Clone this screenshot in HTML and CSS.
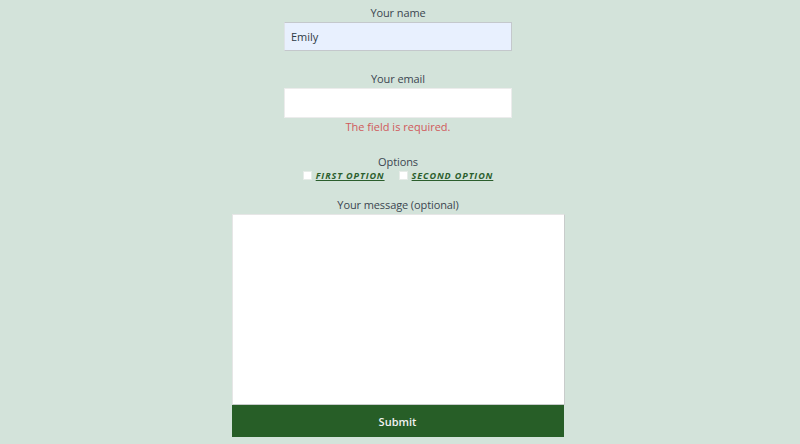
FILE: index.html
```html
<!DOCTYPE html>
<html lang="en">
<head>
<meta charset="utf-8">
<title>Contact form</title>
<link rel="stylesheet" href="styles.css">
</head>
<body>
<form class="form">
  <div class="field field-name">
    <label class="label" for="name">Your name</label>
    <input class="input input-filled" id="name" type="text" value="Emily">
  </div>
  <div class="field field-email">
    <label class="label" for="email">Your email</label>
    <input class="input" id="email" type="email">
    <div class="error">The field is required.</div>
  </div>
  <div class="field field-options">
    <div class="label">Options</div>
    <div class="options">
      <label class="option"><span class="box"></span><span class="option-text">First option</span></label>
      <label class="option"><span class="box"></span><span class="option-text">Second option</span></label>
    </div>
  </div>
  <div class="field field-message">
    <label class="label" for="msg">Your message (optional)</label>
    <textarea class="textarea" id="msg"></textarea>
    <button class="submit" type="button">Submit</button>
  </div>
</form>
</body>
</html>
```

FILE: styles.css
```css
html, body {
  margin: 0;
  padding: 0;
  background: #d3e3da;
  height: 100%;
  overflow: hidden;
}
body {
  font-family: "Open Sans", "Noto Sans", sans-serif;
  font-size: 11px;
  color: #3b4650;
}
.form {
  display: flex;
  flex-direction: column;
  align-items: center;
  padding-top: 6px;
  padding-right: 4px;
}
.field {
  display: flex;
  flex-direction: column;
  align-items: center;
}
.label {
  line-height: 14px;
  height: 14px;
  margin-bottom: 2px;
  letter-spacing: -0.1px;
}
.input {
  box-sizing: border-box;
  width: 228px;
  height: 30px;
  margin: 0;
  padding: 0 6px;
  background: #ffffff;
  border: 1px solid #ececec;
  font-family: inherit;
  font-size: 11px;
  color: #2f3a44;
  outline: none;
}
.input-filled {
  background: #e8f0fe;
  border: 1px solid #c4c8cc;
  border-left-color: #dfe3e8;
  height: 29px;
}
.field-email {
  margin-top: 21px;
}
.error {
  margin-top: 2px;
  line-height: 14px;
  color: #d05a5a;
}
.field-options {
  margin-top: 21px;
}
.field-options .label {
  margin-bottom: 0;
}
.options {
  display: flex;
  gap: 14px;
  height: 12px;
  align-items: center;
  margin-bottom: 1px;
}
.option {
  display: flex;
  align-items: center;
  gap: 4px;
}
.box {
  width: 9px;
  height: 9px;
  background: #ffffff;
  border: 1px solid #e6ece8;
  box-sizing: border-box;
}
.option-text {
  font-size: 9px;
  font-weight: 700;
  font-style: italic;
  text-transform: uppercase;
  text-decoration: underline;
  letter-spacing: 0.9px;
  color: #2b5e2d;
}
.field-message {
  margin-top: 16px;
}
.textarea {
  box-sizing: border-box;
  width: 333px;
  height: 191px;
  margin: 0;
  padding: 4px;
  background: #ffffff;
  border: 1px solid #e6e6e6;
  border-right-color: #c8cccb;
  border-bottom-color: #c8cccb;
  resize: none;
  display: block;
}
.submit {
  width: 332px;
  height: 32px;
  margin: 0;
  align-self: flex-start;
  border: none;
  background: #275e27;
  color: #f2f2f2;
  font-family: inherit;
  font-size: 11px;
  font-weight: 600;
  cursor: pointer;
}
```
